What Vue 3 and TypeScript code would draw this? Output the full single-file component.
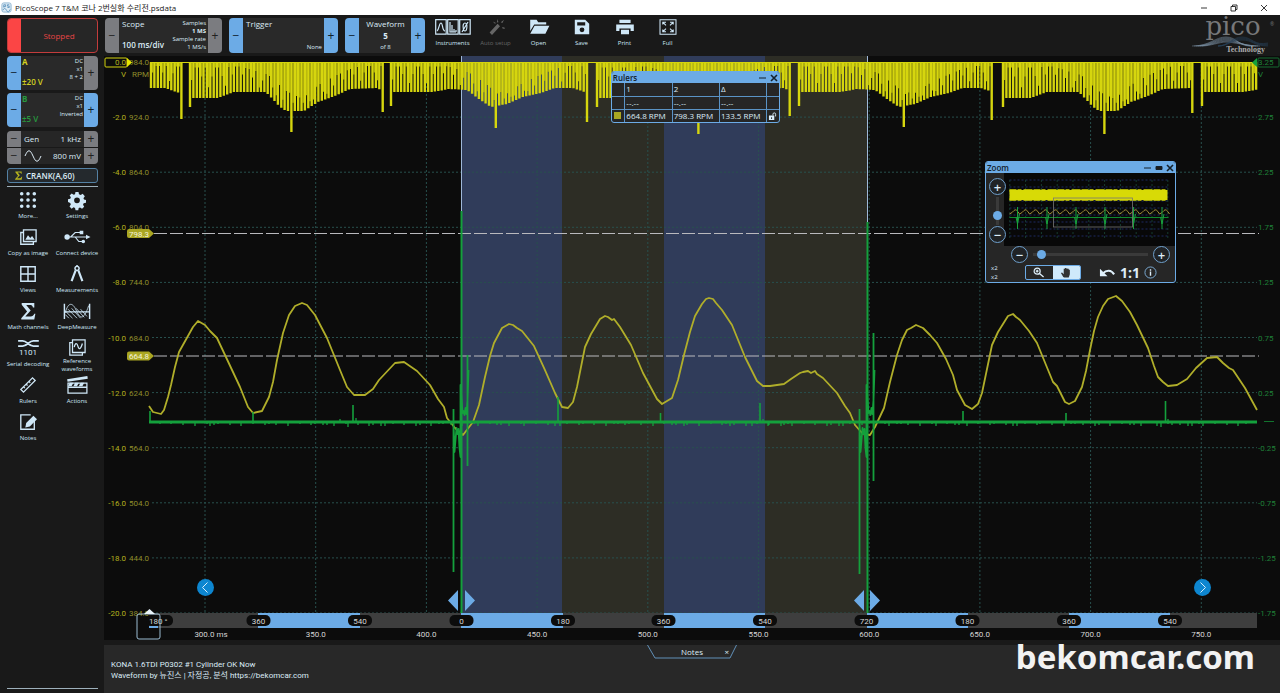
<script setup lang="ts">
import { ref } from 'vue'

interface Shape { d: string; fill?: boolean; w?: number }
interface Tool { label: string; icon: string; dim?: boolean }

const ICONS: Record<string, Shape[]> = {
  more: [{ fill: true, d: [3, 10, 17].flatMap(x => [3, 10, 17].map(y => `M${x - 2} ${y}a2 2 0 1 0 4 0a2 2 0 1 0-4 0z`)).join('') }],
  settings: [{ fill: true, d: 'M8.3 1h3.4l.5 2.6 1.9.9 2.2-1.5 2.4 2.9-1.5 2.1.6 1.4 2.2.6v3l-2.6.6-.7 1.6 1.3 2.3-2.4 2.2-2.2-1.4-1.5.6-.5 2.4H8.4l-.6-2.5-1.6-.7-2.2 1.5-2.3-2.4 1.4-2.2-.6-1.6L0 12.200V9.100l2.500-.6.7-1.600L1.800 4.900l2.300-2.200 2.200 1.400 1.500-.6zM10 7.200a3.200 3.200 0 1 0 0 6.400a3.200 3.200 0 1 0 0-6.400z' }],
  copy: [{ d: 'M5 2h14v13H5zM5 5H2v13h14v-3' }, { fill: true, d: 'M7 13l3-5 2.500 3 2-2 3 4z' }],
  connect: [{ d: 'M-1 10H22M3 10l5-5h6M8 10l4 5h4', w: 1.3 }, { fill: true, d: 'M-4 10a3 3 0 1 0 6 0a3 3 0 1 0-6 0zM20 7.500l5 2.500-5 2.500zM13 3h4v4h-4zM15 15a2 2 0 1 0 4 0a2 2 0 1 0-4 0z' }],
  views: [{ d: 'M2 2h16v16H2zM10 2v16M2 10h16', w: 1.6 }],
  measure: [{ d: 'M8.500 6L4 18M11.500 6L16 18', w: 2.4 }, { d: 'M10 1.500a2.300 2.300 0 1 0 .1 0zM10 0v2', w: 1.7 }],
  math: [{ fill: true, d: 'M3 1h14v5h-1.500C15 4 14 3.400 12 3.400H8l5 6-6 6.600h6c2 0 3-1 4-3h1.200L17 19.500H2.500V18l6.500-7.500L3 3z' }],
  deep: [{ d: 'M-4 2v17M24 2v17M-4 11H24', w: 1.6 }, { d: 'M-3 12C0 0 5 0 9 9S17 22 23 4M-3 14l4 4M-3 10l8 8M0 8l10 10M4 7l10 11M9 7l9 10M14 8l7 8', w: .9 }],
  serial: [{ d: 'M-1 2h5c5 0 7 6 12 6h6M-1 8h5c5 0 7-6 12-6h6', w: 1.9 }],
  reference: [{ d: 'M5 1h14v14H5zM5 4H2v14h14v-3M7 9c1-5 3-5 4-1s3 4 5-3', w: 1.4 }],
  rulers: [{ d: 'M2 15L15 2l3 3L5 18zM5 12l1.500 1.500M8 9l1.500 1.500M11 6l1.500 1.500', w: 1.4 }],
  actions: [{ d: 'M0 8h21v11H0zM0 12.500h21', w: 1.4 }, { fill: true, d: 'M-1 3.500L21.500 0l.5 3L-.5 6.500zM2 7.500h4l-2 4H0zM8 7.500h4l-2 4H6zM14 7.500h4l-2 4h-4z' }],
  notes: [{ d: 'M13 2H2v16h15V9', w: 1.5 }, { fill: true, d: 'M7 16l1-5 8-8 4 4-8 8z' }],
  autosetup: [{ fill: true, d: 'M2 17L12 6l3 3L5 20zM12 0l1 4-2 .5zM18 10l3 1-.4 1.500-2.800-1zM16 4l4-3-2 4zM6 3l4 2-1.300 1z' }],
  open: [{ fill: true, d: 'M-1 1h8l2 3h10v3H4L-1 15zM4.500 8.500H23l-5 10H-1z' }],
  save: [{ fill: true, d: 'M1 1h13l5 5v13H1zM4 4v4h10V4zM10 10.500a3 3 0 1 0 0 6a3 3 0 1 0 0-6z' }],
  print: [{ fill: true, d: 'M3 1h14v4H3zM-1 7h22v8h-4v-3H3v3h-4zM5 13.500h10V19H5z' }],
  full: [{ d: 'M0 1h20v18H0z', w: 1.3 }, { d: 'M3.500 7V4h4M4 4.500l3.500 3.500M16.500 7V4h-4M16 4.500L12.500 8M3.500 13v3h4M4 15.500L7.500 12M16.500 13v3h-4M16 15.500L12.500 12', w: 1.4 }],
}

const sideTools: Tool[] = [
  { label: 'More...', icon: 'more' }, { label: 'Settings', icon: 'settings' },
  { label: 'Copy as image', icon: 'copy' }, { label: 'Connect device', icon: 'connect' },
  { label: 'Views', icon: 'views' }, { label: 'Measurements', icon: 'measure' },
  { label: 'Math channels', icon: 'math' }, { label: 'DeepMeasure', icon: 'deep' },
  { label: 'Serial decoding', icon: 'serial' }, { label: 'Reference waveforms', icon: 'reference' },
  { label: 'Rulers', icon: 'rulers' }, { label: 'Actions', icon: 'actions' },
  { label: 'Notes', icon: 'notes' },
]
const topTools: Tool[] = [
  { label: 'Auto setup', icon: 'autosetup', dim: true }, { label: 'Open', icon: 'open' },
  { label: 'Save', icon: 'save' }, { label: 'Print', icon: 'print' }, { label: 'Full', icon: 'full' },
]

/* Axes */
const rowY = (i: number) => 62 + i * 55.1
const colX = (i: number) => 205 + i * 110.7
const leftTicks = Array.from({ length: 11 }, (_, i) => ({
  y: rowY(i), volts: i === 0 ? '0.0' : `-${i * 2}.0`, rpm: `${984 - i * 60}.0`,
}))
const rightTicks = ['3.25', '2.75', '2.25', '1.75', '1.25', '0.75', '0.25', '-0.25', '-0.75', '-1.25', '-1.75']
const timeTicks = Array.from({ length: 10 }, (_, i) => ({ x: colX(i) + (i ? 0 : 6), text: `${300 + i * 50}.0${i ? '' : ' ms'}` }))
const degrees = [
  { x: 258.500, t: '360' }, { x: 360, t: '540' }, { x: 461.500, t: '0' }, { x: 563, t: '180' }, { x: 663.500, t: '360' },
  { x: 765, t: '540' }, { x: 866.500, t: '720' }, { x: 967.500, t: '180' }, { x: 1069, t: '360' }, { x: 1170, t: '540' },
]
const blueSpans = [[258, 360], [461, 563], [664, 765], [867, 968], [1069, 1170]]

/* Crank sensor: 60-2 toothed wheel, two envelopes that alternate by revolution */
type Pt = [number, number]
const heavy: Pt[] = [[0, 107], [2, 98], [28, 98], [44, 92], [76, 92], [90, 107], [96, 111], [114, 111], [128, 102], [145, 96], [160, 89], [188, 88], [192, 92]]
const light: Pt[] = [[0, 106], [2, 92], [42, 92], [58, 89], [76, 90], [88, 99], [100, 107], [116, 104], [132, 97], [150, 93], [164, 88], [182, 88], [196, 93]]
function envelope(pts: Pt[], x: number): number {
  for (let i = 1; i < pts.length; i++) {
    const [x0, y0] = pts[i - 1], [x1, y1] = pts[i]
    if (x <= x1) return y0 + (y1 - y0) * Math.max(0, x - x0) / (x1 - x0)
  }
  return pts[pts.length - 1][1]
}
const revolutions = [
  { from: 151, to: 183, origin: -10, env: light, last: 119, peak: 0, peakY: 0 },
  { from: 190, to: 384, origin: 190, env: heavy, last: 112, peak: 291, peakY: 132 },
  { from: 391, to: 589, origin: 391, env: light, last: 122, peak: 497, peakY: 128 },
  { from: 597, to: 791, origin: 597, env: heavy, last: 116, peak: 698, peakY: 134 },
  { from: 799, to: 995, origin: 799, env: light, last: 120, peak: 904, peakY: 127 },
  { from: 1003, to: 1193, origin: 1003, env: heavy, last: 113, peak: 1103, peakY: 134 },
  { from: 1202, to: 1257, origin: 1202, env: light, last: 0, peak: 0, peakY: 0 },
]
let teeth = ''
let fills = ''
revolutions.forEach(r => {
  let n = 0
  for (let x = r.from; x < r.to; x += 3.38, n++) {
    let y = envelope(r.env, x - r.origin)
    if (r.origin < 0) y = 88 + Math.max(0, x - 165) * .35
    if (r.last && x + 3.38 >= r.to) y = r.last
    if (r.peak && Math.abs(x - r.peak) < 1.7) y = r.peakY
    teeth += `M${x.toFixed(1)} 62V${y.toFixed(1)}`
    const dense = r.peak ? Math.max(0, 1 - Math.abs(x - r.peak - 8) / 60) : 0
    const part = n % 3 === 0 ? .4 : n % 5 === 0 ? .7 : .15
    if (x + 3.38 < r.to) fills += `M${(x + 1.69).toFixed(1)} 62v${((Math.min(y, 110) - 62) * Math.min(.85, part + dense * .6)).toFixed(1)}`
  }
})

const rpmCurve = '149,406 153,412 161,414 164,410 168,397 171,385 175,367 179,352 193,327 198,321 205,325 210,331 217,338 225,355 240,387 248,407 253,413 262,411 269,397 273,382 277,360 283,333 289,315 295,306 302,303 307,305 315,315 327,338 340,370 347,387 354,395 365,395 373,389 379,380 395,363 404,362 417,371 430,385 438,399 444,407 447,418 455,428 463,435 473,422 479,405 485,377 490,356 494,343 502,328 509,324 513,325 517,328 522,331 534,346 545,370 555,393 562,407 568,408 573,402 577,387 585,347 591,334 600,319 605,316 608,317 612,320 614,319 620,327 631,345 643,373 657,399 662,404 672,398 678,380 684,355 690,332 695,316 702,304 706,299 709,298 713,299 716,303 722,310 732,325 745,357 757,381 763,386 770,386 784,384 791,379 800,373 803,372 808,371 811,373 815,371 817,374 823,378 837,393 845,406 850,413 855,425 863,434 870,435 875,427 884,408 890,382 897,355 902,340 907,330 911,328 916,325 923,328 930,335 937,343 946,359 953,375 957,390 965,405 972,409 978,404 982,393 992,345 998,332 1008,316 1013,314 1016,317 1020,320 1029,331 1037,343 1046,365 1053,382 1057,386 1065,402 1069,404 1075,401 1082,387 1086,371 1090,350 1094,331 1098,317 1103,306 1108,299 1116,296 1122,301 1130,312 1137,325 1148,348 1154,366 1158,377 1163,382 1168,386 1177,385 1187,379 1196,368 1207,358 1217,357 1223,363 1229,368 1233,370 1245,388 1257,410'

const blips: Pt[] = [[253, 412], [353, 405], [558, 397], [660.500, 413], [760, 403], [963, 411], [1066, 413], [1165.500, 401]]
let blipPath = 'M150 422V411'
blips.forEach(([x, y]) => { blipPath += `M${x} 422V${y}` })
let noise = ''
for (let i = 0; i < 130; i++) {
  const x = 160 + (i * 73.7 + (i % 7) * 31) % 1090
  noise += `M${x.toFixed(0)} 422v${2 + (i % 3)}`
}
noise += 'M340 422v-3M348 422v5M356 422v-4M358 422v3M763 422v-3M768 422v4M752 422v4M1161 422v5M1168 422v-3M1172 422v3'
function misfire(x: number, top: number, low: number, side: number, sideLow: number) {
  return {
    thick: `M${x} ${top}V613`,
    thin: `M${x - 8} 409V${low}M${x + 6} ${side}V${sideLow}M${x - 8} 422l1 30 2-24 1 6 1-5 1 19 1 9v-72l1 14 1 14 1-2 1 4 1-7 1 6 1-14 1-30`,
  }
}
const misfires = [misfire(461.500, 211, 572, 355, 466), misfire(867.500, 222, 574, 333, 481)]

/* Overview inside the zoom window */
let miniWave = 'M1009 213'
for (let i = 0; i < 16; i++) miniWave += `q2.500-1 4.500-3.500t5.500 3.500`
const miniSpikes = [1017, 1046.500, 1075.500, 1104.500, 1133, 1161.500]

const rulers = [
  { key: 'volts', swatch: false, values: ['--.--', '--.--', '--.--'] },
  { key: 'rpm', swatch: true, values: ['664.8 RPM', '798.3 RPM', '133.5 RPM'] },
]
const markers = [{ y: 233.500, text: '798.3' }, { y: 356, text: '664.8' }]
const zoomX = ref(4)
const zoomY = ref(22)
</script>

<template>
  <div class="app">
    <header class="titlebar">
      <svg class="app-icon" viewBox="0 0 12 12" aria-hidden="true">
        <rect x="1" y="1" width="10" height="10" rx="2" fill="#dcebf5" stroke="#8cb4d0" />
        <path d="M3 6V3h2v2H3M9 3H7v1.500h2V6H7M2 9q2-4 4 0t4-1" fill="none" stroke="#4b86b4" stroke-width=".8" />
      </svg>
      <h1>PicoScope 7 T&amp;M 코나 2번실화 수리전.psdata</h1>
      <div class="window-buttons">
        <button aria-label="Minimise"><svg viewBox="0 0 8 8"><path d="M1 4h6" /></svg></button>
        <button aria-label="Restore"><svg viewBox="0 0 8 8"><path d="M1 2.500h4.500V7H1zM2.500 2.500V1H7v4.500H5.500" /></svg></button>
        <button aria-label="Close"><svg viewBox="0 0 8 8"><path d="M1 1l6 6M7 1L1 7" /></svg></button>
      </div>
    </header>

    <div class="workspace">
      <aside class="sidebar">
        <button class="stopped"><i></i><span>Stopped</span></button>
        <section class="card channel-a">
          <button class="step blue" aria-label="Decrease range A">−</button>
          <div class="card-body"><b class="name">A</b><small class="info">DC<br>x1<br>8 + 2</small><b class="range">±20 V</b></div>
          <button class="step" aria-label="Increase range A">+</button>
        </section>
        <section class="card channel-b">
          <button class="step blue" aria-label="Decrease range B">−</button>
          <div class="card-body"><b class="name">B</b><small class="info">DC<br>x1<br>Inverted</small><b class="range">±5 V</b></div>
          <button class="step blue" aria-label="Increase range B">+</button>
        </section>
        <section class="generator">
          <div class="gen-row">
            <button class="step" aria-label="Lower frequency">−</button><span>Gen</span><span class="value">1 kHz</span>
            <button class="step" aria-label="Raise frequency">+</button>
          </div>
          <div class="gen-row">
            <button class="step" aria-label="Lower amplitude">−</button>
            <svg class="sine" viewBox="0 0 18 12"><path d="M1 6c3-7 5-7 8 0s5 7 8 0" fill="none" stroke="#dcebf5" /></svg>
            <span class="value">800 mV</span>
            <button class="step" aria-label="Raise amplitude">+</button>
          </div>
        </section>
        <button class="crank">
          <svg viewBox="0 0 20 20"><path :d="ICONS.math[0].d" fill="#b5b31e" /></svg>CRANK(A,60)
        </button>
        <nav class="tools">
          <button v-for="t in sideTools" :key="t.label" class="tool">
            <svg viewBox="0 0 20 20">
              <path v-for="(s, i) in ICONS[t.icon]" :key="i" :d="s.d" fill-rule="evenodd"
                :fill="s.fill ? 'currentColor' : 'none'" :stroke="s.fill ? 'none' : 'currentColor'" :stroke-width="s.w ?? 1.5" />
              <text v-if="t.icon === 'serial'" x="10" y="18" class="bits">1101</text>
            </svg>
            <span>{{ t.label }}</span>
          </button>
        </nav>
      </aside>

      <main>
        <div class="toolbar">
          <section class="card scope">
            <button class="step" aria-label="Shorter timebase">−</button>
            <div class="card-body"><span class="name">Scope</span><small class="info">Samples<br><b>1 MS</b><br>Sample rate<br>1 MS/s</small><b class="range">100 ms/div</b></div>
            <button class="step" aria-label="Longer timebase">+</button>
          </section>
          <section class="card trigger">
            <button class="step blue" aria-label="Previous trigger">−</button>
            <div class="card-body"><span class="name">Trigger</span><small class="none">None</small></div>
            <button class="step blue" aria-label="Next trigger">+</button>
          </section>
          <section class="card waveform">
            <button class="step blue" aria-label="Previous waveform">−</button>
            <div class="card-body stack"><span>Waveform</span><b>5</b><small>of 8</small></div>
            <button class="step blue" aria-label="Next waveform">+</button>
          </section>
          <nav class="top-tools">
            <button class="tool">
              <svg class="wide" viewBox="0 0 36 16" fill="none" stroke="currentColor">
                <path d="M.700.700h10.500v14.500H.700zM12.700.700h10.500v14.500H12.700zM24.700.700h10.500v14.500H24.700z" stroke-width="1.2" />
                <path d="M2 12c2-1 2-8 4-8s1 8 4 8M15 3v10h6M17 13V6M19 13v-3M21 13v-2M30 4c3 0 2 8 0 8s-3-8 0-8M27 13l6-10" stroke-width="1.2" />
              </svg>
              <span>Instruments</span>
            </button>
            <button v-for="t in topTools" :key="t.label" class="tool" :class="{ dim: t.dim }" :disabled="t.dim">
              <svg viewBox="0 0 20 20">
                <path v-for="(s, i) in ICONS[t.icon]" :key="i" :d="s.d" fill-rule="evenodd"
                  :fill="s.fill ? 'currentColor' : 'none'" :stroke="s.fill ? 'none' : 'currentColor'" :stroke-width="s.w ?? 1.5" />
              </svg>
              <span>{{ t.label }}</span>
            </button>
          </nav>
          <svg class="logo" viewBox="0 0 84 40" role="img" aria-label="pico Technology">
            <text x="43" y="17" text-anchor="middle" font-size="26" fill="#77787a" class="serif">pico</text>
            <text x="80" y="8" font-size="5" fill="#77787a">®</text>
            <g fill="none" stroke-width=".5">
              <path v-for="n in 6" :key="n" :d="`M${n * 2} 28C20 28 ${24 + n} ${18 + n} 36 ${18 + n}S${46 + n * 2} 28 ${58 + n * 2} 28`" stroke="#7d92a6" />
              <path v-for="n in 4" :key="'b' + n" :d="`M28 28C38 28 42 ${18 + n} 52 ${18 + n}S64 28 78 ${24 + n}`" stroke="#28435a" />
            </g>
            <text x="75" y="34" text-anchor="end" font-size="7" font-weight="bold" fill="#a9a9a9" class="liberation">Technology</text>
          </svg>
        </div>

        <div class="chart">
          <svg class="plot" viewBox="104 56 1176 584" role="img" aria-label="Crank, RPM and cylinder waveform">
            <rect x="104" y="56" width="1176" height="584" fill="#0c0c0c" />
            <rect x="461" y="56" width="101" height="557" fill="#303c5a" />
            <rect x="562" y="56" width="102" height="557" fill="#2d2d25" />
            <rect x="664" y="56" width="101" height="557" fill="#303c5a" />
            <rect x="765" y="56" width="102" height="557" fill="#2d2d25" />
            <g stroke="#28504e" stroke-dasharray="2 2" stroke-width="1">
              <path v-for="i in 10" :key="'h' + i" :d="`M152 ${rowY(i)}H1257`" />
              <path v-for="i in 10" :key="'v' + i" :d="`M${colX(i - 1)} 62V613`" />
            </g>
            <path d="M461.500 56V613M867.500 56V613" stroke="#9fb8d8" stroke-width="1" />
            <path :d="fills" stroke="#b9b80e" stroke-width="1.3" />
            <path :d="teeth" stroke="#d6d60e" stroke-width="2.4" />
            <path d="M150 62.500H1257" stroke="#d4d40e" />
            <path d="M154 233.500H1259M154 356H1259" stroke="#b9b9bd" stroke-width="1.2" stroke-dasharray="13 3" />
            <polyline :points="rpmCurve" fill="none" stroke="#b0ae2a" stroke-width="1.8" stroke-linejoin="round" />
            <g fill="none" stroke="#14a03c">
              <path d="M149 422H1257" stroke-width="3" />
              <path :d="blipPath" stroke-width="1.6" />
              <path :d="noise" stroke-width="1.3" />
              <template v-for="(m, i) in misfires" :key="i">
                <path :d="m.thin" stroke-width="1.8" stroke-linejoin="round" />
                <path :d="m.thick" stroke-width="2" />
              </template>
              <path d="M1264 421.500h10" stroke-width=".7" />
            </g>

            <g class="volts">
              <text v-for="t in leftTicks" :key="t.y" x="126" :y="t.y + 3" text-anchor="end">{{ t.volts }}</text>
              <text x="126" y="77" text-anchor="end">V</text>
            </g>
            <g class="rpm">
              <text v-for="t in leftTicks" :key="t.y" x="149" :y="t.y + 3" text-anchor="end">{{ t.rpm }}</text>
              <text x="149" y="77" text-anchor="end">RPM</text>
            </g>
            <g class="right-axis">
              <text v-for="(t, i) in rightTicks" :key="t" x="1258" :y="rowY(i) + 3">{{ t }}</text>
              <text x="1258" y="77">V</text>
            </g>
            <rect x="105" y="58" width="22" height="9" rx="1" fill="none" stroke="#d4d40e" />
            <path d="M127 58l5 4.500-5 4.500z" fill="#e6e600" />
            <rect x="1258" y="58" width="21" height="9" rx="1" fill="none" stroke="#146b30" />
            <path d="M1257 58v9l-5-4.500z" fill="#14a03c" />
            <g v-for="m in markers" :key="m.text">
              <path :d="`M129 ${m.y - 4.500}h20l5 4.500-5 4.500h-20q-2 0-2-2v-5q0-2 2-2z`" fill="#aaa622" />
              <text x="149" :y="m.y + 3" text-anchor="end" fill="#f3f3dc">{{ m.text }}</text>
            </g>

            <rect x="149" y="613" width="1108" height="15" fill="#3e3e3e" />
            <rect v-for="s in blueSpans" :key="s[0]" :x="s[0]" y="613" :width="s[1] - s[0]" height="15" fill="#6cabe6" />
            <rect x="146" y="615" width="27" height="11" rx="5" fill="#0c0c0c" />
            <text x="149" y="623.500" class="label">180 °</text>
            <g v-for="d in degrees" :key="d.x">
              <rect :x="d.x - 12" y="615" width="24" height="11" rx="5" fill="#0c0c0c" />
              <text :x="d.x" y="623.500" text-anchor="middle" class="label">{{ d.t }}</text>
            </g>
            <text v-for="t in timeTicks" :key="t.text" :x="t.x" y="637" text-anchor="middle" class="label">{{ t.text }}</text>
            <rect x="137" y="614" width="23" height="25" rx="2" fill="none" stroke="#9bbcd2" />
            <path d="M144 614l5.500-5 5.500 5z" fill="#e8f3fa" />
            <path d="M149 627h9" stroke="#6cabe6" stroke-width="2" />
            <path d="M458 590v21l-10-10.500zM465 590v21l10-10.500zM864 590v21l-10-10.500zM870 590v21l10-10.500z" fill="#6cabe6" />
          </svg>

          <button class="pan back" aria-label="Earlier"><svg viewBox="0 0 17 17"><path d="M10.500 3.500l-5 5 5 5" /></svg></button>
          <button class="pan next" aria-label="Later"><svg viewBox="0 0 17 17"><path d="M6.500 3.500l5 5-5 5" /></svg></button>

          <section class="panel rulers">
            <header><h2>Rulers</h2>
              <button aria-label="Minimise rulers"><svg viewBox="0 0 8 8"><path d="M0 4h7" /></svg></button>
              <button aria-label="Close rulers"><svg viewBox="0 0 8 8"><path d="M1 1l6 6M7 1L1 7" stroke-width="1.6" /></svg></button>
            </header>
            <table>
              <thead><tr><th></th><th>1</th><th>2</th><th>Δ</th><th></th></tr></thead>
              <tbody>
                <tr v-for="r in rulers" :key="r.key">
                  <td class="mark"><i v-if="r.swatch"></i></td>
                  <td v-for="(v, i) in r.values" :key="i">{{ v }}</td>
                  <td class="mark"><button v-if="r.swatch" aria-label="Lock rulers"><svg viewBox="0 0 10 9"><path d="M1 4h6v5H1z" fill="#dff0fb" /><path d="M5.500 4V2.500a1.500 1.500 0 0 1 3 0V5" fill="none" stroke="#dff0fb" /><path d="M3.500 6h1v2h-1z" fill="#222" /></svg></button></td>
                </tr>
              </tbody>
            </table>
          </section>

          <section class="panel zoom">
            <header><h2>Zoom</h2>
              <button aria-label="Minimise zoom"><svg viewBox="0 0 8 8"><path d="M0 4h7" /></svg></button>
              <button aria-label="Collapse zoom"><svg viewBox="0 0 8 8"><path d="M1 2.500h6v3H1z" fill="#1c1c1c" /></svg></button>
              <button aria-label="Close zoom"><svg viewBox="0 0 8 8"><path d="M1 1l6 6M7 1L1 7" stroke-width="1.6" /></svg></button>
            </header>
            <div class="zoom-main">
              <div class="zoom-y">
                <button class="round" aria-label="Zoom in vertically">+</button>
                <input v-model="zoomY" type="range" min="0" max="100" aria-label="Vertical zoom">
                <button class="round" aria-label="Zoom out vertically">−</button>
              </div>
              <svg class="overview" viewBox="1004 172 170 73">
                <g stroke-dasharray="2 2" stroke-width=".8" stroke="#24327a">
                  <path v-for="i in 9" :key="'a' + i" :d="`M1009 ${172 + i * 7}H1168`" />
                  <path v-for="i in 11" :key="'b' + i" :d="`M${993.500 + i * 15.800} 179V238`" stroke="#1b4a3a" />
                </g>
                <rect x="1009" y="189" width="158" height="10" fill="#d8da06" />
                <path d="M1009 189.500H1167M1009 198.500H1167" stroke="#d8da06" stroke-width="2.4" stroke-dasharray="7 1 4 2 9 1" />
                <path :d="miniWave" fill="none" stroke="#a5903a" stroke-width="1" />
                <path d="M1009 216.500H1168" stroke="#0e8a2d" />
                <path v-for="x in miniSpikes" :key="x" :d="`M${x} 206v22m-1.500-12l1.500 7 2-10`" fill="none" stroke="#18a03c" stroke-width="1" />
                <rect x="1053" y="197" width="79" height="29" fill="none" stroke="#777" stroke-width=".8" />
              </svg>
            </div>
            <div class="zoom-x">
              <button class="round" aria-label="Zoom out horizontally">−</button>
              <input v-model="zoomX" type="range" min="0" max="100" aria-label="Horizontal zoom">
              <button class="round" aria-label="Zoom in horizontally">+</button>
            </div>
            <div class="zoom-foot">
              <small>x2<br>x2</small>
              <div class="segment">
                <button aria-label="Magnify"><svg viewBox="0 0 14 12"><circle cx="5" cy="4.500" r="3.300" fill="none" stroke="#dff0fb" stroke-width="1.3" /><path d="M3.500 4.500h3M5 3v3M7.500 7l4.500 4" stroke="#dff0fb" stroke-width="1.400" /></svg></button>
                <button class="on" aria-label="Pan"><svg viewBox="0 0 14 12"><path d="M4 11L1.500 6.500l1.200-.5L4.500 8V2h1.300v-1h1.400v.5h1.400V2H10v1h1.200v5L10 11.500H5z" fill="#333" /></svg></button>
              </div>
              <button class="plain" aria-label="Undo zoom"><svg viewBox="0 0 18 12"><path d="M4 7c4-4 9-4 12 1" fill="none" stroke="#dff0fb" stroke-width="2.200" /><path d="M1 2v8h8z" fill="#dff0fb" /></svg></button>
              <button class="ratio">1:1</button>
              <button class="plain info-btn" aria-label="Zoom information"><svg viewBox="0 0 14 14"><circle cx="7" cy="7" r="6" fill="none" stroke="#7fb2de" /><path d="M7 3.500v1.500M7 6v4.500" stroke="#dff0fb" stroke-width="1.500" /></svg></button>
            </div>
          </section>
        </div>

        <section class="notes">
          <div class="notes-tab">
            <svg viewBox="0 0 90 14" preserveAspectRatio="none"><path d="M.500 0L8 13h75L89.500 0" fill="none" stroke="#6190b8" /></svg>
            <button class="tab-name">Notes</button><button class="tab-close" aria-label="Close notes">×</button>
          </div>
          <p>KONA 1.6TDI P0302 #1 Cylinder OK Now<br>Waveform by 뉴진스 | 자정공, 분석 https://bekomcar.com</p>
          <strong class="brand">bekomcar.com</strong>
        </section>
      </main>
    </div>
  </div>
</template>

<style>
body { margin: 0; background: #191919; }
</style>

<style scoped>
* { box-sizing: border-box; }
.app { min-height: 100vh; display: flex; flex-direction: column; background: #191919; color: #dcecf6; font: 8px/10px "Open Sans", "Noto Sans CJK KR", sans-serif; }
button { font: inherit; color: inherit; background: none; border: 0; padding: 0; display: flex; align-items: center; justify-content: center; }
h1, h2, p { margin: 0; font-size: 8px; font-weight: 400; }
small { font-size: 6px; line-height: 8px; }
svg { display: block; overflow: visible; }

.titlebar { height: 15px; display: flex; align-items: center; gap: 3px; padding: 0 12px 0 1px; background: #fff; color: #222; }
.app-icon { width: 11px; height: 11px; }
.window-buttons { margin-left: auto; display: flex; gap: 22px; }
.window-buttons svg { width: 8px; height: 8px; fill: none; stroke: #222; stroke-width: .9; }

.workspace { flex: 1; display: flex; }
.sidebar { width: 104px; flex: none; padding: 3px 6px 4px 7px; display: flex; flex-direction: column; gap: 3px; }
main { flex: 1; min-width: 0; display: flex; flex-direction: column; }

.stopped { height: 35px; border: 1px solid #c33c3c; border-radius: 4px; background: #262626; color: #e64545; display: flex; align-items: stretch; overflow: hidden; }
.stopped i { width: 13px; background: #fb4545; }
.stopped span { flex: 1; align-self: center; }
.card { height: 35px; display: flex; border-radius: 4px; overflow: hidden; background: #292929; }
.step { width: 14px; flex: none; background: #7b7c80; color: #202020; font-size: 12px; }
.step.blue { background: #6cabe6; color: #10202c; }
.card-body { flex: 1; display: grid; grid-template-columns: auto 1fr; grid-template-rows: 15px 1fr; padding: 1px 1px 2px 1px; }
.name { grid-area: 1 / 1; }
.info { grid-area: 1 / 2 / 3 / 3; text-align: right; }
.range { grid-area: 2 / 1; align-self: end; white-space: nowrap; font-weight: 600; line-height: 12px; }
.channel-a .name, .channel-a .range { color: #d5d321; }
.channel-b .name, .channel-b .range { color: #27993f; }
.channel-a, .channel-b { height: 34px; }
.generator { display: flex; flex-direction: column; gap: 1px; border-radius: 4px; overflow: hidden; margin-top: 1px; }
.gen-row { height: 16px; display: flex; align-items: center; gap: 3px; background: #262626; }
.gen-row .step { height: 16px; }
.gen-row .value { margin-left: auto; }
.sine { width: 18px; height: 12px; }
.crank { height: 15px; margin-top: 1px; border: 1px solid #5481a4; border-radius: 3px; gap: 3px; justify-content: flex-start; padding-left: 6px; background: #24292d; font-weight: 600; }
.crank svg { width: 9px; height: 9px; }

.tools { flex: 1; border-top: 1px solid #9db0bb; border-bottom: 1px solid #9db0bb; display: grid; grid-template-columns: 49px 49px; grid-auto-rows: 37px; padding-top: 4px; justify-content: center; align-content: start; }
.tool { flex-direction: column; justify-content: flex-start; gap: 3px; color: #cfe7f7; font-size: 6px; line-height: 8px; white-space: nowrap; }
.tool svg { width: 18px; height: 18px; }
.tools .tool:nth-child(10) { gap: 0; }
.tools .tool:nth-child(10) span { white-space: normal; width: 34px; }
.bits { font: 9px Roboto, sans-serif; text-anchor: middle; fill: currentColor; }

.toolbar { height: 41px; display: flex; align-items: flex-start; gap: 7px; padding: 3px 6px 0 1px; }
.scope { width: 117px; }
.trigger { width: 109px; }
.waveform { width: 80px; }
.toolbar .card-body { padding: 1px 2px 2px 3px; }
.scope .info { line-height: 8px; }
.none { grid-area: 2 / 2; text-align: right; align-self: end; }
.card-body.stack { display: flex; flex-direction: column; align-items: center; justify-content: center; gap: 2px; }
.top-tools { display: flex; margin-left: -1px; }
.top-tools .tool { width: 43px; gap: 4px; }
.top-tools .tool svg { margin-top: 1px; width: 16px; height: 16px; }
.top-tools .tool svg.wide { width: 36px; }
.tool.dim { color: #666; }
.logo { width: 84px; height: 40px; margin-left: auto; }
.serif { font-family: "DejaVu Serif", serif; }
.liberation { font-family: "Liberation Serif", serif; font-size: 8px; }

.chart { position: relative; }
.plot { width: 100%; height: auto; font: 8px Roboto, sans-serif; overflow: hidden; }
.volts { fill: #b3b11d; }
.rpm { fill: #8f8d2b; }
.right-axis { fill: #1f8038; }
.label { fill: #d6d6d6; }
.pan { position: absolute; top: 89.600%; width: 17px; height: 17px; border-radius: 50%; background: #0d86d0; }
.pan svg { width: 17px; height: 17px; fill: none; stroke: #d8effc; }
.back { left: 7.900%; }
.next { right: 5.900%; }

.panel { position: absolute; border: 1px solid #6cabe6; border-radius: 3px; background: #262626; overflow: hidden; }
.panel header { height: 11px; background: #6cabe6; color: #14202a; display: flex; align-items: center; gap: 3px; padding: 0 1px; }
.panel h2 { margin-right: auto; font-weight: 600; }
.panel header svg { width: 8px; height: 8px; stroke: #14202a; }
.rulers { left: 43.100%; top: 15px; width: 169px; }
.rulers table { width: 100%; border-collapse: collapse; table-layout: fixed; }
.rulers th, .rulers td { height: 13px; padding: 0 0 0 1px; text-align: left; font-weight: 400; border: 1px solid #5a93c6; white-space: nowrap; }
.rulers tr > :first-child { width: 13px; border-left: 0; }
.rulers tr > :last-child { width: 12px; border-right: 0; }
.rulers tr:first-child > th { border-top: 0; }
.rulers tr:last-child > td { border-bottom: 0; }
.rulers i { display: block; width: 7px; height: 7px; background: #aaa622; margin-left: 1px; }
.rulers td svg { width: 9px; height: 8px; }

.zoom { right: 104px; top: 105px; width: 191px; }
.zoom-main { display: flex; height: 73px; }
.zoom-y { width: 18px; padding: 5px 0 3px; display: flex; flex-direction: column; align-items: center; justify-content: space-between; z-index: 1; }
.zoom-y .round { margin-left: 5px; }
.zoom-y input { writing-mode: vertical-lr; direction: rtl; width: 10px; height: 28px; margin: 0 0 0 5px; }
.overview { flex: 1; min-width: 0; height: 73px; background: #080808; }
.round { width: 17px; height: 17px; flex: none; border: 1px solid #6fa0cc; border-radius: 50%; background: #202326; font-size: 13px; font-weight: 600; }
.zoom-x { display: flex; align-items: center; gap: 5px; padding: 0 5px 0 25px; }
.zoom-x input { flex: 1; min-width: 0; height: 10px; margin: 0; }
input[type="range"] { appearance: none; background: none; }
input[type="range"]::-webkit-slider-runnable-track { background: #3a3a3a; }
.zoom-x input::-webkit-slider-runnable-track { height: 3px; }
.zoom-y input::-webkit-slider-runnable-track { width: 3px; }
input[type="range"]::-webkit-slider-thumb { appearance: none; width: 9px; height: 9px; border-radius: 50%; background: #6cabe6; }
.zoom-x input::-webkit-slider-thumb { margin-top: -3px; }
.zoom-y input::-webkit-slider-thumb { margin-left: -3px; }
.zoom-foot { display: flex; align-items: center; height: 19px; padding: 0 18px 0 5px; gap: 4px; }
.zoom-foot small { line-height: 9px; }
.segment { display: flex; margin: 0 auto 0 23px; border: 1px solid #6cabe6; border-radius: 2px; overflow: hidden; }
.segment button { width: 27px; height: 13px; }
.segment .on { background: #cfe9fb; }
.segment svg { width: 14px; height: 11px; }
.plain svg { width: 17px; height: 13px; }
.info-btn svg { width: 13px; }
.ratio { font-size: 14px; font-weight: 700; }

.notes { position: relative; flex: 1; min-height: 48px; margin-top: 5px; background: #282828; }
.notes-tab { position: relative; width: 90px; height: 14px; margin: 0 auto; display: flex; align-items: center; justify-content: center; }
.notes-tab svg { position: absolute; inset: 0; width: 100%; height: 100%; }
.tab-close { position: absolute; right: 8px; }
.notes p { padding-left: 7px; font: 8px/11px Roboto, "Noto Sans CJK KR", sans-serif; }
.brand { position: absolute; right: 25px; top: -1px; font: bold 33px/26px "Noto Sans", sans-serif; color: #f2f2f2; }
</style>
